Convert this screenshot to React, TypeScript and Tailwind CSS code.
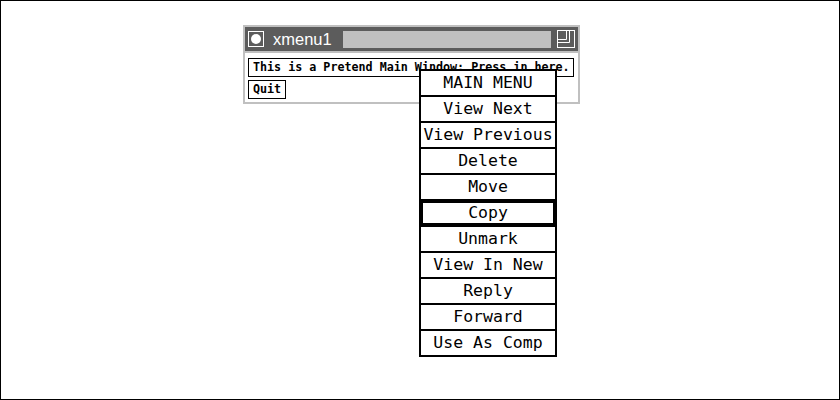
import React from 'react';

const menuItems = [
  'View Next',
  'View Previous',
  'Delete',
  'Move',
  'Copy',
  'Unmark',
  'View In New',
  'Reply',
  'Forward',
  'Use As Comp',
];

const mono = "font-['DejaVu_Sans_Mono','Liberation_Mono',monospace]";

function ResizeIcon() {
  return (
    <svg width="18" height="18" viewBox="0 0 18 18" className="block">
      <rect x="0.5" y="0.5" width="17" height="17" fill="none" stroke="white" strokeWidth="1" />
      <path d="M9.5 0.5 V9.5 H0.5" fill="none" stroke="white" strokeWidth="1" />
      <path d="M12.5 0.5 V12.5 H0.5" fill="none" stroke="white" strokeWidth="1" />
    </svg>
  );
}

function MainWindow() {
  return (
    <div className="absolute left-[242px] top-[24px] w-[337px] h-[79px] bg-[#c0c0c0] p-[2px] flex flex-col gap-[2px]">
      <div className="h-[24px] bg-[#5c5c5c] flex items-center shrink-0">
        <div className="ml-[3px] w-[16px] h-[16px] border border-white flex items-center justify-center">
          <div className="w-[10px] h-[10px] rounded-full bg-white" />
        </div>
        <span className="ml-[9px] text-white text-[16.5px] leading-none font-['Liberation_Sans',Arial,sans-serif]">
          xmenu1
        </span>
        <div className="ml-[11px] flex-1 h-[17px] bg-[#c0c0c0]" />
        <div className="ml-[6px] mr-[3px]">
          <ResizeIcon />
        </div>
      </div>
      <div className="flex-1 bg-white pl-[3px] pt-[5px] flex flex-col items-start gap-[3px]">
        <div className={`w-[326px] h-[19px] border border-black flex items-center pl-[4px] text-[11.7px] font-bold leading-none text-black ${mono}`}>
          This is a Pretend Main Window: Press in here.
        </div>
        <div className={`h-[19px] border border-black flex items-center px-[4px] text-[11.7px] font-bold leading-none text-black ${mono}`}>
          Quit
        </div>
      </div>
    </div>
  );
}

function PopupMenu() {
  return (
    <div className={`absolute left-[418px] top-[68px] w-[138px] border-2 border-black bg-white flex flex-col text-black text-[16.5px] leading-none ${mono}`}>
      <div className="h-[24px] flex items-center justify-center">MAIN MENU</div>
      {menuItems.map((item) => (
        <div key={item} className="border-t-2 border-black">
          <div
            className={`h-[24px] flex items-center justify-center whitespace-nowrap ${item === 'Copy' ? 'border-2 border-black' : ''}`}
          >
            {item}
          </div>
        </div>
      ))}
    </div>
  );
}

export default function App() {
  return (
    <div className="relative w-[840px] h-[400px] bg-white border border-black overflow-hidden">
      <MainWindow />
      <PopupMenu />
    </div>
  );
}
